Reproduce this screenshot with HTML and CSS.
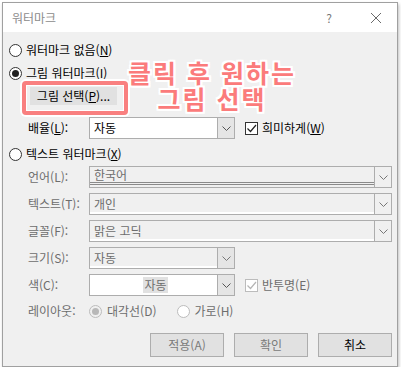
FILE: index.html
```html
<!DOCTYPE html>
<html lang="ko">
<head>
<meta charset="utf-8">
<link rel="stylesheet" href="styles.css">
</head>
<body>
<div class="dialog">
  <div class="titlebar">
    <span class="title">워터마크</span>
    <span class="help">?</span>
    <svg class="close" width="12" height="12" viewBox="0 0 12 12"><path d="M1 1 L11 11 M11 1 L1 11" stroke="#6a6a6a" stroke-width="1" fill="none"/></svg>
  </div>
  <div class="content">
    <div class="radio-row r1"><span class="radio"></span><span>워터마크 없음(<u>N</u>)</span></div>
    <div class="radio-row r2"><span class="radio checked"></span><span>그림 워터마크(<u>I</u>)</span></div>
    <div class="pic-row"><span class="btn pic-btn">그림 선택(<u>P</u>)...</span></div>
    <div class="field-row scale-row">
      <span class="label">배율(<u>L</u>):</span>
      <div class="combo short white"><span class="val">자동</span><span class="drop"><svg width="9" height="5" viewBox="0 0 9 5"><path d="M0.5 0.5 L4.5 4.5 L8.5 0.5" stroke="#555" fill="none"/></svg></span></div>
      <span class="check on"><svg width="11" height="11" viewBox="0 0 11 11"><path d="M1.5 5.5 L4.5 8.5 L10 2" stroke="#222" stroke-width="1.2" fill="none"/></svg></span>
      <span class="check-label">희미하게(<u>W</u>)</span>
    </div>
    <div class="radio-row r3"><span class="radio"></span><span>텍스트 워터마크(<u>X</u>)</span></div>
    <div class="text-fields">
      <div class="field-row dis">
        <span class="label">언어(L):</span>
        <div class="combo long lang"><span class="val">한국어</span><span class="drop"><svg width="9" height="5" viewBox="0 0 9 5"><path d="M0.5 0.5 L4.5 4.5 L8.5 0.5" stroke="#777" fill="none"/></svg></span></div>
      </div>
      <div class="field-row dis">
        <span class="label">텍스트(T):</span>
        <div class="combo long"><span class="val">개인</span><span class="drop"><svg width="9" height="5" viewBox="0 0 9 5"><path d="M0.5 0.5 L4.5 4.5 L8.5 0.5" stroke="#777" fill="none"/></svg></span></div>
      </div>
      <div class="field-row dis">
        <span class="label">글꼴(F):</span>
        <div class="combo long"><span class="val">맑은 고딕</span><span class="drop"><svg width="9" height="5" viewBox="0 0 9 5"><path d="M0.5 0.5 L4.5 4.5 L8.5 0.5" stroke="#777" fill="none"/></svg></span></div>
      </div>
      <div class="field-row dis">
        <span class="label">크기(S):</span>
        <div class="combo short"><span class="val">자동</span><span class="drop"><svg width="9" height="5" viewBox="0 0 9 5"><path d="M0.5 0.5 L4.5 4.5 L8.5 0.5" stroke="#777" fill="none"/></svg></span></div>
      </div>
      <div class="field-row dis">
        <span class="label">색(C):</span>
        <div class="combo short white color"><span class="val center"><span class="hl">자동</span></span><span class="drop"><svg width="9" height="5" viewBox="0 0 9 5"><path d="M0.5 0.5 L4.5 4.5 L8.5 0.5" stroke="#555" fill="none"/></svg></span></div>
        <span class="check off"><svg width="11" height="11" viewBox="0 0 11 11"><path d="M1.5 5.5 L4.5 8.5 L10 2" stroke="#b5b5b5" stroke-width="1.2" fill="none"/></svg></span>
        <span class="check-label">반투명(E)</span>
      </div>
    </div>
    <div class="layout-row dis">
      <span class="label">레이아웃:</span>
      <span class="radio dim checked"></span><span class="opt">대각선(D)</span>
      <span class="radio dim white"></span><span class="opt">가로(H)</span>
    </div>
    <div class="buttons">
      <span class="btn big gray">적용(A)</span>
      <span class="btn big gray">확인</span>
      <span class="btn big">취소</span>
    </div>
  </div>
  <div class="hl-box"></div>
  <div class="note"><div class="note-line">클릭 후 원하는</div><div class="note-line">그림 선택</div></div>
</div>
</body>
</html>
```

FILE: styles.css
```css
* { box-sizing: border-box; }
html, body { margin: 0; padding: 0; background: #fff; }
body {
  font-family: "Noto Sans CJK KR", "Noto Sans", sans-serif;
  font-size: 12px;
  color: #000;
}
.dialog {
  position: relative;
  margin: 2px 0 0 2px;
  width: 396px;
  height: 365px;
  border: 1px solid #a0a0a0;
  background: #f0f0f0;
  box-shadow: 1px 2px 3px rgba(0,0,0,0.25);
}
.titlebar {
  height: 29px;
  background: #fff;
  display: flex;
  align-items: center;
  padding-left: 9px;
}
.title { color: #8c8c8c; font-size: 12px; line-height: 14px; flex: 1; }
.help { color: #777; font-size: 12px; margin-right: 38px; }
.close { margin-right: 15px; }
.content { display: flex; flex-direction: column; }
.radio-row { display: flex; align-items: center; height: 18px; padding-left: 6px; gap: 4px; line-height: 14px; }
.r1 { margin-top: 9px; }
.r2 { margin-top: 5px; }
.r3 { margin-top: 6px; }
.radio {
  width: 13px; height: 13px; border-radius: 50%;
  border: 1px solid #333; background: #fff;
  display: inline-flex; align-items: center; justify-content: center; flex: none;
}
.radio.checked::after { content: ""; width: 7px; height: 7px; border-radius: 50%; background: #222; }
.radio.dim { border-color: #bcbcbc; background: #f0f0f0; }
.radio.dim.checked::after { background: #b8b8b8; }
.radio.dim.white { background: #fff; }
.pic-row { margin-top: 5px; padding-left: 27px; height: 18px; display: flex; }
.btn {
  display: inline-flex; align-items: center; justify-content: center;
  background: #e1e1e1; border: 1px solid #adadad; line-height: 14px;
}
.pic-btn { width: 87px; height: 18px; border-color: #e1e1e1; }
.field-row { display: flex; align-items: center; height: 22px; padding-left: 25px; line-height: 14px; }
.scale-row { margin-top: 12px; }
.label { width: 61px; flex: none; }
.dis .label, .dis .val, .dis .check-label, .dis .opt { color: #6d6d6d; }
.combo {
  height: 22px; display: flex; border: 1px solid #adadad; background: #f0f0f0;
  box-shadow: inset 0 -2px 0 #fff;
}
.combo .val { flex: 1; padding-left: 4px; display: flex; align-items: center; }
.combo .val.center { justify-content: center; }
.hl { background: #e1e1e1; padding: 1px 1px; }
.combo.white { background: #fff; box-shadow: none; }
.combo .drop {
  width: 18px; flex: none; margin: -1px -1px -1px 0;
  border: 1px solid #adadad; background: #e5e5e5;
  display: flex; align-items: center; justify-content: center;
}
.combo.long .drop { background: #f0f0f0; }
.combo.lang .val { padding-bottom: 4px; }
.combo.lang { box-shadow: inset 0 -2px 0 #f0f0f0, inset 0 -3px 0 #8a8a8a, inset 0 -4px 0 #f0f0f0, inset 0 -5px 0 #8a8a8a; }
.short { width: 146px; }
.long { width: 303px; }
.check {
  width: 13px; height: 13px; border: 1px solid #333; background: #fff; margin-left: 10px;
  display: inline-flex; align-items: center; justify-content: center; flex: none;
}
.check.off { border-color: #bcbcbc; }
.check-label { margin-left: 4px; }
.text-fields { margin-top: 3px; display: flex; flex-direction: column; gap: 5px; }
.layout-row { display: flex; align-items: center; height: 18px; margin-top: 6px; padding-left: 25px; line-height: 14px; }
.layout-row .opt { margin-left: 5px; margin-right: 20px; }
.buttons { margin-top: 13px; display: flex; justify-content: flex-end; gap: 10px; padding-right: 5px; }
.btn.big { width: 74px; height: 24px; }
.btn.gray { color: #7a7a7a; }
.hl-box {
  position: absolute; left: 19px; top: 78px; width: 106px; height: 34px;
  border: 4px solid #f98080; border-radius: 4px;
  box-shadow: 0 0 0 2px #fff, inset 0 0 0 1px #fff;
}
.note {
  position: absolute; left: 125px; top: 56px; width: max-content;
  display: flex; flex-direction: column; align-items: center;
  font-size: 25px; font-weight: 700; line-height: 26px;
  color: #fb7b7b; letter-spacing: 2px;
  text-shadow: 2px 0 #fff, -2px 0 #fff, 0 2px #fff, 0 -2px #fff, 2px 2px #fff, -2px -2px #fff, 2px -2px #fff, -2px 2px #fff;
}
.note-line { height: 26px; }
```
